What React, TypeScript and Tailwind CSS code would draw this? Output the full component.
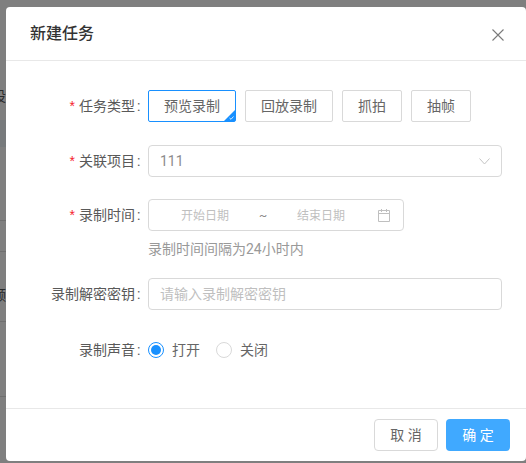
import React from "react";

function Label({ text, req }: { text: string; req?: boolean }) {
  return (
    <div className="w-[142px] shrink-0 flex justify-end items-center text-[14px] text-[#595959] leading-[22px] pr-[8px]">
      {req && <span className="text-[#f5222d] mr-[4px] text-[14px] font-['Liberation_Sans']">*</span>}
      <span>{text}</span>
      <span className="ml-[2px] w-[3px]">:</span>
    </div>
  );
}

function TypeBtn({ text, w, active }: { text: string; w: string; active?: boolean }) {
  return (
    <div
      className={`relative h-[32px] flex items-center justify-center rounded-[2px] border text-[14px] bg-white text-[#666666] ${w} ${
        active ? "border-[#1890ff]" : "border-[#d9d9d9]"
      }`}
    >
      {text}
      {active && (
        <svg className="absolute right-0 bottom-0" width="11" height="11" viewBox="0 0 11 11">
          <path d="M11 0V11H0Z" fill="#1890ff" />
          <path d="M5.5 8 L7 9.3 L9.5 6.5" fill="none" stroke="#fff" strokeWidth="0.8" />
        </svg>
      )}
    </div>
  );
}

export default function App() {
  return (
    <div className="relative w-[526px] h-[463px] overflow-hidden bg-[#7f7f7f] font-['Roboto','Noto_Sans_CJK_SC',sans-serif] pt-[7px] pl-[6px]">
      <div className="absolute left-0 top-[120px] w-[6px] h-[27px] bg-[#777a7c]" />
      <div className="absolute left-0 top-[220px] w-[6px] h-px bg-[#6f6f6f]" />
      <div className="absolute left-0 top-[251px] w-[6px] h-px bg-[#6f6f6f]" />
      <div className="absolute left-0 top-[321px] w-[6px] h-px bg-[#6f6f6f]" />
      <div className="absolute left-0 top-[396px] w-[6px] h-px bg-[#6f6f6f]" />
      <div className="absolute left-[-8px] top-[88px] text-[14px] leading-[16px] text-[#2a2a2a]">设</div>
      <div className="absolute left-[-8px] top-[287px] text-[14px] leading-[16px] text-[#2a2a2a]">频</div>
      <div className="relative w-[520px] h-[454px] bg-white rounded-[4px] flex flex-col">
        <div className="h-[54px] shrink-0 border-b border-[#e8e8e8] flex items-center justify-between pl-[24px] pr-[22px]">
          <span className="text-[16px] font-medium text-[#333333] leading-[22px]">新建任务</span>
          <svg width="12" height="12" viewBox="0 0 12 12" className="mt-[2px]">
            <path d="M0.5 0.5L11.5 11.5M11.5 0.5L0.5 11.5" stroke="#7a7a7a" strokeWidth="1.1" fill="none" />
          </svg>
        </div>
        <div className="flex-1 pt-[29px] flex flex-col">
          <div className="flex items-center h-[32px]">
            <Label text="任务类型" req />
            <div className="flex gap-[9px]">
              <TypeBtn text="预览录制" w="w-[88px]" active />
              <TypeBtn text="回放录制" w="w-[88px]" />
              <TypeBtn text="抓拍" w="w-[60px]" />
              <TypeBtn text="抽帧" w="w-[60px]" />
            </div>
          </div>
          <div className="flex items-center h-[32px] mt-[23px]">
            <Label text="关联项目" req />
            <div className="w-[354px] h-[32px] border border-[#d9d9d9] rounded-[4px] flex items-center justify-between pl-[11px] pr-[11px] text-[14px] text-[#8c8c8c]">
              <span>111</span>
              <svg width="11" height="7" viewBox="0 0 11 7">
                <path d="M0.5 0.5L5.5 6L10.5 0.5" stroke="#c4c4c4" strokeWidth="1" fill="none" />
              </svg>
            </div>
          </div>
          <div className="flex items-center h-[32px] mt-[22px]">
            <Label text="录制时间" req />
            <div className="w-[256px] h-[32px] border border-[#d9d9d9] rounded-[4px] flex items-center text-[12px] text-[#bfbfbf]">
              <span className="ml-[32px] mt-[1px] shrink-0">开始日期</span>
              <span className="ml-[30px] mt-[1px] w-[8px] text-center text-[#8c8c8c]">~</span>
              <span className="ml-[30px] mt-[1px] shrink-0">结束日期</span>
              <svg className="ml-[33px] shrink-0" width="12" height="13" viewBox="0 0 12 13">
                <path d="M0.5 1.5H11.5V12.5H0.5ZM0.5 4.5H11.5M3.5 0V3M8.5 0V3" stroke="#bfbfbf" strokeWidth="1" fill="none" />
              </svg>
            </div>
          </div>
          <div className="ml-[142px] mt-[8px] h-[20px] text-[14px] leading-[20px] text-[#999999]">录制时间间隔为24小时内</div>
          <div className="flex items-center h-[32px] mt-[19px]">
            <Label text="录制解密密钥" />
            <div className="w-[354px] h-[32px] border border-[#d9d9d9] rounded-[4px] flex items-center pl-[11px] text-[14px] text-[#bfbfbf]">
              请输入录制解密密钥
            </div>
          </div>
          <div className="flex items-center h-[22px] mt-[29px]">
            <Label text="录制声音" />
            <div className="flex items-center text-[14px] text-[#666666]">
              <span className="w-[16px] h-[16px] rounded-full border border-[#1890ff] flex items-center justify-center">
                <span className="w-[10px] h-[10px] rounded-full bg-[#1890ff]" />
              </span>
              <span className="ml-[8px]">打开</span>
              <span className="ml-[16px] w-[16px] h-[16px] rounded-full border border-[#d9d9d9]" />
              <span className="ml-[8px]">关闭</span>
            </div>
          </div>
        </div>
        <div className="h-[53px] shrink-0 border-t border-[#e8e8e8] flex items-center justify-end gap-[8px] pr-[16px]">
          <div className="w-[64px] h-[32px] rounded-[4px] border border-[#d9d9d9] flex items-center justify-center text-[14px] text-[#666666]">取 消</div>
          <div className="w-[64px] h-[32px] rounded-[4px] bg-[#40a9ff] flex items-center justify-center text-[14px] text-white">确 定</div>
        </div>
      </div>
    </div>
  );
}
